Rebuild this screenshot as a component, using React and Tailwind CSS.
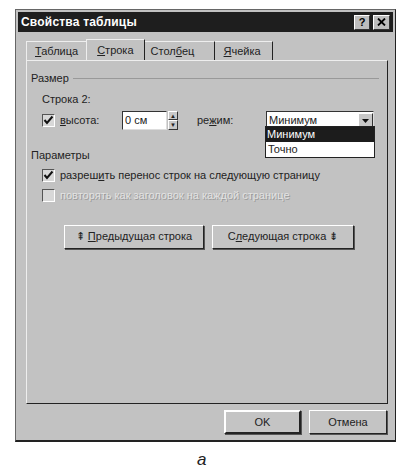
import React from "react";

const font = { fontFamily: '"Liberation Sans", Arial, sans-serif' };

function Check({ checked, disabled }) {
  return (
    <div className="w-[13px] h-[13px] border-t border-l border-t-[#555] border-l-[#555] border-b border-r border-b-white border-r-white bg-[#d8d8d8] flex items-center justify-center shrink-0">
      {checked && (
        <svg width="11" height="11" viewBox="0 0 11 11">
          <path d="M1.5 5 L4 8 L9.5 1.5" stroke="#111" strokeWidth="2" fill="none" />
        </svg>
      )}
      {disabled && null}
    </div>
  );
}

function Btn({ children, className = "" }) {
  return (
    <div
      className={
        "h-[24px] flex items-center justify-center border border-t-white border-l-white border-b-[#222] border-r-[#222] shadow-[1px_1px_0_#555] bg-[#c4c4c4] text-[11px] text-[#222] " +
        className
      }
    >
      {children}
    </div>
  );
}

export default function App() {
  return (
    <div className="w-[414px] h-[472px] bg-white relative overflow-hidden" style={font}>
      <div className="pt-[9px] pl-[15px]">
        <div className="w-[381px] h-[433px] bg-[#c2c2c2] border border-[#666] border-b-[#222] border-r-[#222] border-b-2 flex flex-col">
          {/* title bar */}
          <div className="mx-[2px] mt-[2px] h-[20px] bg-[#1e1e1e] flex items-center justify-between pl-[3px] pr-[3px]">
            <span className="text-white font-bold text-[12px] tracking-[0.2px]">Свойства таблицы</span>
            <div className="flex gap-[3px]">
              <div className="w-[16px] h-[15px] bg-[#bdbdbd] border border-t-white border-l-white border-b-[#333] border-r-[#333] flex items-center justify-center text-[11px] font-bold text-black leading-none">?</div>
              <div className="w-[17px] h-[15px] bg-[#bdbdbd] border border-t-white border-l-white border-b-[#333] border-r-[#333] flex items-center justify-center">
                <svg width="9" height="8" viewBox="0 0 9 8">
                  <path d="M1 0.5 L8 7.5 M8 0.5 L1 7.5" stroke="#000" strokeWidth="1.8" />
                </svg>
              </div>
            </div>
          </div>

          {/* tabs */}
          <div className="ml-[10px] mt-[7px] h-[21px] flex items-end text-[11px] text-[#222]">
            <div className="h-[19px] px-[8px] flex items-center border-t border-l border-t-[#eee] border-l-[#eee]">
              <span><u>Т</u>аблица</span>
            </div>
            <div className="h-[21px] px-[10px] flex items-center border-t border-l border-r border-t-[#eee] border-l-[#eee] border-r-[#222]">
              <span><u>С</u>трока</span>
            </div>
            <div className="h-[19px] w-[70px] pl-[6px] flex items-center border-r border-t border-r-[#222] border-t-[#eee]">
              <span>Стол<u>б</u>ец</span>
            </div>
            <div className="h-[19px] w-[58px] pl-[9px] flex items-center border-r border-t border-r-[#222] border-t-[#eee]">
              <span><u>Я</u>чейка</span>
            </div>
          </div>

          {/* panel */}
          <div className="ml-[10px] w-[362px] h-[344px] border-l border-t border-l-[#eee] border-t-[#eee] border-r border-b border-r-[#222] border-b-[#222] relative text-[11px] text-[#222]">
            <div className="pl-[4px] pt-[9px] flex items-center gap-[4px] pr-[8px]">
              <span>Размер</span>
              <div className="flex-1 border-t border-[#999] border-b-white"></div>
            </div>
            <div className="pl-[15px] mt-[4px]">Строка 2:</div>
            <div className="pl-[15px] mt-[4px] flex items-center h-[19px]">
              <Check checked />
              <span className="ml-[5px] w-[62px]"><u>в</u>ысота:</span>
              <div className="w-[45px] h-[19px] bg-white border border-t-[#333] border-l-[#333] border-b-[#ddd] border-r-[#ddd] flex items-center pl-[2px]">0 см</div>
              <div className="w-[10px] h-[19px] flex flex-col ml-[1px]">
                <div className="h-[9px] bg-[#c8c8c8] border border-t-white border-l-white border-b-[#333] border-r-[#333] flex items-center justify-center text-[6px] leading-none">▲</div>
                <div className="h-[10px] bg-[#c8c8c8] border border-t-white border-l-white border-b-[#333] border-r-[#333] flex items-center justify-center text-[6px] leading-none">▼</div>
              </div>
              <span className="ml-[19px] w-[69px]">ре<u>ж</u>им:</span>
              <div className="w-[108px] h-[19px] bg-white border border-t-[#333] border-l-[#333] border-b-[#ddd] border-r-[#ddd] flex items-center">
                <span className="pl-[2px] flex-1">Минимум</span>
                <div className="w-[15px] h-[15px] bg-[#c8c8c8] border border-t-white border-l-white border-b-[#333] border-r-[#333] flex items-center justify-center">
                  <svg width="7" height="4" viewBox="0 0 7 4"><path d="M0 0 H7 L3.5 4 Z" fill="#111" /></svg>
                </div>
              </div>
            </div>
            <div className="pl-[4px] mt-[17px] flex items-center gap-[4px] pr-[8px]">
              <span>Параметры</span>
            </div>
            <div className="pl-[15px] mt-[4px] flex items-center gap-[5px] h-[15px]">
              <Check checked />
              <span>разреш<u>и</u>ть перенос строк на следующую страницу</span>
            </div>
            <div className="pl-[15px] mt-[5px] flex items-center gap-[5px] h-[15px]">
              <Check disabled />
              <span className="text-[#e2e2e2] [text-shadow:1px_1px_0_#9a9a9a]">повторять как заголовок на каждой странице</span>
            </div>
            <div className="mt-[22px] pl-[37px] flex gap-[8px]">
              <Btn className="w-[140px]">⇞ <u className="ml-[3px]">П</u>редыдущая строка</Btn>
              <Btn className="w-[142px]">С<u>л</u>едующая строка <span className="ml-[3px]">⇟</span></Btn>
            </div>

            {/* dropdown list overlay */}
            <div className="absolute left-[238px] top-[65px] w-[110px] h-[32px] bg-white border border-[#222] flex flex-col text-[11px]">
              <div className="h-[15px] bg-[#1c1c1c] text-white pl-[1px] flex items-center">Минимум</div>
              <div className="h-[15px] pl-[2px] flex items-center">Точно</div>
            </div>
          </div>

          {/* bottom buttons */}
          <div className="flex justify-end gap-[8px] pr-[8px] mt-[6px]">
            <Btn className="w-[77px] border-2 border-[#222]">OK</Btn>
            <Btn className="w-[78px]">Отмена</Btn>
          </div>
        </div>
      </div>
      <div className="absolute left-[197px] top-[447px] text-[17px] italic text-[#222]">a</div>
    </div>
  );
}
